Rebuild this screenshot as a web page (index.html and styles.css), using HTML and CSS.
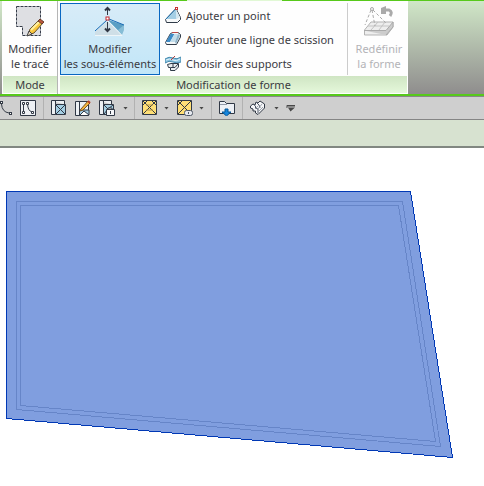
FILE: index.html
```html
<!DOCTYPE html>
<html lang="fr">
<head>
<meta charset="utf-8">
<title>Modification de forme</title>
<link rel="stylesheet" href="styles.css">
</head>
<body>
<header class="ribbon">
  <section class="panel panel-mode">
    <div class="panel-body">
      <button class="big">
        <svg width="32" height="32" viewBox="0 0 32 32"><path d="M2.500 1.500H26.500V30.500H8.500V21.500H2.500Z" fill="#dedfe3" stroke="#343b48" stroke-dasharray="3 1"/><path d="M14 30L16 24L25 15L29 18L20 28Z" fill="#f9c63e" stroke="#65512c"/><path d="M17 25L26 16" stroke="#fff0a0" stroke-width="2"/><path d="M24 16L26 14L30 17L28 19Z" fill="#bd573b" stroke="#693d2d"/><path d="M13 31L15 26L18 29Z" fill="#e8d7c0" stroke="#444"/></svg>
        <span>Modifier<br>le tracé</span>
      </button>
    </div>
    <h2>Mode</h2>
  </section>
  <section class="panel panel-shape">
    <div class="panel-body">
      <button class="big selected">
        <svg width="32" height="32" viewBox="0 0 32 32"><path d="M1 27L13 16L28 30H1Z" fill="#cfdfe7"/><path d="M14 15L30 20V25L28 30Z" fill="#86bdd6"/><path d="M14 15L30 20L24 25Z" fill="#5b9fc4"/><path d="M1 30.500H28L14 16" fill="none" stroke="#eef5f8"/><path d="M1 26L13 15M15 14L30 20" stroke="#1769b4" stroke-width="1" fill="none"/><path d="M13.500 10V4M13.500 17V25" stroke="#303744"/><path d="M11 5.500L13.500 3L16 5.500M11 23.500L13.500 26L16 23.500" fill="none" stroke="#303744" stroke-width="2"/><rect x="12" y="12" width="3" height="3" fill="#fff" stroke="#c6282e"/></svg>
        <span>Modifier<br>les sous-éléments</span>
      </button>
      <div class="commands">
        <button><svg width="16" height="16" viewBox="0 0 16 16"><path d="M.5 12.500L11 1.500L15.500 10.500V12.500L12.500 15.500H1.500Z" fill="#f6f8f9" stroke="#303b48"/><path d="M1 12L11 2L11.500 12Z" fill="#a4cee4"/><path d="M11 2L11.500 12L15 10Z" fill="#d2e7f0"/><path d="M1 12L10.500 2" stroke="#2574b0"/><rect x="10.500" y=".5" width="2" height="2" fill="#fff" stroke="#c83434"/></svg><span>Ajouter un point</span></button>
        <button><svg width="16" height="16" viewBox="0 0 16 16"><path d="M.5 11.500L5.500 2.500L8 1.500H13L15.500 3.500V6L11.500 13.500H1.500Z" fill="#f4f7f8" stroke="#303b48"/><path d="M1 11L5.500 3H9.500L5 11Z" fill="#3d8bc7"/><path d="M5 11L9.500 3H13L10 11Z" fill="#c3ddea"/><path d="M10 11L13 3L15 4.500L11 13Z" fill="#8fb5cb"/><path d="M7 1.500H13" stroke="#b64a4a"/></svg><span>Ajouter une ligne de scission</span></button>
        <button><svg width="16" height="16" viewBox="0 0 16 16"><path d="M0 4Q4 1 8 3T16 2V7Q12 9 8 7T0 8Z" fill="#8bc3df" stroke="#468aae"/><path d="M1 5Q5 3 8 5T15 4" fill="none" stroke="#e0f2f9"/><path d="M6 5L10 1" stroke="#b63b38"/><path d="M2.500 9.500L6 8.500H13.500V12L10 15.500H5.500V12.500H3.500Z" fill="#e9eef0" stroke="#303b48"/><path d="M6 12.500H10L13 9M8 9V12" stroke="#303b48" fill="none"/></svg><span>Choisir des supports</span></button>
      </div>
      <button class="big reset" disabled>
        <svg width="32" height="32" viewBox="0 0 32 32"><path d="M1.500 25L8 17H30V22L24 30H1.500Z" fill="#eee" stroke="#b3b3b3"/><path d="M1 25.500H23L30 17V22L23 30" fill="#ccc" stroke="#aaa"/><path d="M8 25L15 17M16 25L22 17M5 21H26" stroke="#c4c4c4"/><path d="M8 5L2 20M9 5L12 21M10 5L23 18" fill="none" stroke="#aaa" stroke-dasharray="3 2"/><circle cx="9" cy="4" r="1.500" fill="#f8f8f8" stroke="#aaa"/><path d="M20 5H26Q30 7 27 11" fill="none" stroke="#aaa" stroke-width="3"/><path d="M23 1V9H18V3Z" fill="#aaa"/></svg>
        <span>Redéfinir<br>la forme</span>
      </button>
    </div>
    <h2>Modification de forme</h2>
  </section>
  <span class="tab-edge"></span>
</header>

<nav class="toolbar" aria-label="Outils">
  <button class="tool tool-first" aria-label="Ligne"><svg width="16" height="16" viewBox="0 0 16 16"><path d="M4.500 4Q5 12 12 13" fill="none" stroke="#343b46"/><rect x="3.500" y="1.500" width="2" height="2" fill="#fff" stroke="#343b46"/><rect x="12.500" y="12.500" width="2" height="2" fill="#fff" stroke="#343b46"/></svg></button>
  <button class="tool" aria-label="Lignes"><svg width="16" height="16" viewBox="0 0 16 16"><path d="M.5 .5H15.500V15.500H.5Z" fill="#edf0f4" stroke="#303845"/><path d="M3.500 4V12M7.500 4Q8 11 12 12" fill="none" stroke="#303845"/><path d="M2.500 2.500H4.500V4.500H2.500ZM2.500 11.500H4.500V13.500H2.500ZM6.500 2.500H8.500V4.500H6.500ZM11.500 11.500H13.500V13.500H11.500Z" fill="#fff" stroke="#303845"/></svg></button>
  <i class="divider"></i>
  <button class="tool" aria-label="Vue"><svg width="16" height="16" viewBox="0 0 16 16"><path d="M.5 .5H13.500V4.500M.5 .5V14.500H4.500V.5" fill="#edf0f3" stroke="#303845"/><path d="M4.500 4.500H14.500V14.500H4.500Z" fill="#a5cee2" stroke="#303845"/><path d="M5 5L14 14M14 5L5 14" stroke="#303845"/></svg></button>
  <button class="tool" aria-label="Modifier la vue"><svg width="16" height="16" viewBox="0 0 16 16"><path d="M.5 1.500H13.500V15.500H.5Z" fill="#edf0f3" stroke="#303845"/><path d="M4.500 2V15M5 10H14V15H5" fill="#a5cee2" stroke="#303845"/><path d="M5 15L9 11L14 15" fill="#fff" stroke="#303845"/><path d="M6 9L13 1L15 3L8 10L5 11Z" fill="#f5b539" stroke="#77542a"/><path d="M13 1L15 3" stroke="#b43d28" stroke-width="2"/></svg></button>
  <button class="tool" aria-label="Verrouiller la vue"><svg width="16" height="16" viewBox="0 0 16 16"><path d="M.5 .5H12.500V4.500M.5 .5V14.500H4.500V.5" fill="#edf0f3" stroke="#303845"/><path d="M4.500 4.500H14.500V14.500H4.500Z" fill="#a5cee2" stroke="#303845"/><path d="M5 5L9 9L14 5M5 14L9 9" fill="none" stroke="#303845"/><path d="M9 10V8H13V10M7.500 9.500H15.500V15.500H7.500Z" fill="#f5f6f8" stroke="#303845"/><path d="M11.500 11V14" stroke="#303845"/></svg></button>
  <button class="arrow" aria-label="Options de vue"></button>
  <i class="divider"></i>
  <button class="tool" aria-label="Cadre"><svg width="16" height="16" viewBox="0 0 16 16"><path d="M.5 .5H14.500V14.500H.5Z" fill="#ffdf76" stroke="#303845"/><path d="M1 1L14 14M14 1L1 14M1 5L5 1M10 1L14 5" fill="none" stroke="#303845"/><path d="M4 5H11M4 10H11" stroke="#b9984a"/></svg></button>
  <button class="arrow arrow-near" aria-label="Options du cadre"></button>
  <button class="tool" aria-label="Cadre lié"><svg width="16" height="16" viewBox="0 0 16 16"><path d="M.5 .5H14.500V14.500H.5Z" fill="#ffdf76" stroke="#303845"/><path d="M1 1L14 14M14 1L1 14M1 5L5 1" fill="none" stroke="#303845"/><rect x="7.500" y="10.500" width="8" height="5" rx="2" fill="#e5e8ee" stroke="#505967"/><path d="M11.500 12V14" stroke="#505967"/></svg></button>
  <button class="arrow arrow-near" aria-label="Options du lien"></button>
  <i class="divider"></i>
  <button class="tool" aria-label="Charger"><svg width="16" height="16" viewBox="0 0 16 16"><path d="M.5 13.500V1.500H5.500L7.500 3.500H15.500V13.500Z" fill="#edf0f5" stroke="#303845"/><path d="M1 4.500H8" stroke="#9299a6"/><path d="M6 9H9V12H12L7.500 16L3 12H6Z" fill="#1686dd" stroke="#075696"/></svg></button>
  <i class="divider"></i>
  <button class="tool" aria-label="Assemblage"><svg width="16" height="16" viewBox="0 0 16 16"><path d="M.5 6L3 4L5 5L6 2L8 3L10 1L14.500 4V8L8 14.500L5.500 13V11L3 11V9L.5 8Z" fill="#f5f6f8" stroke="#303845"/><path d="M3 4L5.500 6V8L8 9V13M6 2L9 5L10 8" fill="none" stroke="#505967"/><path d="M8 12L13 7M5 9L8 6M8 9L12 4" fill="none" stroke="#9da4ae"/></svg></button>
  <button class="arrow" aria-label="Options d’assemblage"></button>
  <button class="arrow more" aria-label="Plus"></button>
</nav>
<div class="options"></div>
<main class="canvas">
  <svg width="484" height="338" viewBox="0 0 484 338" shape-rendering="crispEdges" role="img" aria-label="Dalle">
    <path class="slab" d="M6.500 43.500H410.500L452.500 309.500L6.500 270.500Z"/>
    <path class="inset" d="M16.500 53.500H402.500L440.500 298.500L16.500 261.500Z"/>
    <path class="inset" d="M20.500 57.500H398.500L435.500 293.500L20.500 257.500Z"/>
  </svg>
</main>
</body>
</html>
```
FILE: styles.css
```css
* { box-sizing: border-box; }
body {
  margin: 0;
  background: #fff;
  color: #3b3b42;
  font: 11px/15px "Noto Sans", "Open Sans", sans-serif;
  overflow: hidden;
}
button {
  border: 0;
  padding: 0;
  background: none;
  color: inherit;
  font: inherit;
}
svg { display: block; flex: none; }
.ribbon {
  position: relative;
  display: flex;
  height: 96px;
  padding-left: 2px;
  border-top: 1px solid #57c91b;
  border-bottom: 2px solid #57c91b;
  background: linear-gradient(#d0e7c7, #8f8d8d);
}
.tab-edge {
  position: absolute;
  top: -1px;
  left: 187px;
  width: 95px;
  height: 1px;
  background: #e1f8d5;
}
.panel {
  display: flex;
  flex-direction: column;
  background: #fefefe;
  border-right: 1px solid #fff;
}
.panel-mode { width: 56px; border-right-color: #b5b5b5; }
.panel-shape { width: 350px; padding-left: 1px; }
.panel-body { display: flex; height: 75px; }
.panel h2 {
  height: 17px;
  margin: 0 0 0 1px;
  background: linear-gradient(#cfe5c3, #e5f8db);
  font: inherit;
  line-height: 18px;
  text-align: center;
}
.big {
  display: flex;
  flex: none;
  flex-direction: column;
  align-items: center;
  width: 56px;
  padding-top: 4px;
  white-space: nowrap;
}
.big span { margin-top: 4px; }
.selected {
  width: 100px;
  height: 72px;
  margin: 2px 0 0 1px;
  padding-top: 1px;
  border: 1px solid #0867c2;
  background: linear-gradient(#d8ecf8, #c1e6f8);
}
.commands {
  display: flex;
  flex: none;
  flex-direction: column;
  width: 187px;
  padding: 2px 0 0 5px;
}
.commands button {
  display: flex;
  align-items: center;
  gap: 5px;
  height: 24px;
  white-space: nowrap;
}
.reset {
  width: 59px;
  height: 72px;
  margin-top: 2px;
  padding: 2px 0 0 4px;
  border-left: 1px solid #ccc;
  color: #b3b3b7;
}
.toolbar {
  display: flex;
  align-items: center;
  gap: 8px;
  height: 24px;
  border-top: 1px solid #888;
  border-bottom: 1px solid #858585;
  background: #cfcfcf;
}
.tool { flex: none; width: 16px; height: 16px; }
.tool-first { margin-left: -3px; margin-right: -1px; }
.divider {
  width: 1px;
  height: 22px;
  margin: 0 -1px;
  background: #b2b2b2;
}
.arrow { width: 5px; height: 3px; margin: 0 -1px 0 0; background: #484848; clip-path: polygon(0 0, 100% 0, 50% 100%); }
.arrow-near { margin-left: -2px; margin-right: 0; }
.more { width: 9px; height: 7px; clip-path: polygon(0 0, 100% 0, 100% 2px, 0 2px, 0 3px, 100% 3px, 50% 100%); }
.options {
  height: 28px;
  border-bottom: 2px solid #818781;
  background: #d7e2d0;
}
.canvas { overflow: hidden; }
.slab { fill: #809edf; stroke: #0038b5; }
.inset { fill: none; stroke: #6685c8; }
```
